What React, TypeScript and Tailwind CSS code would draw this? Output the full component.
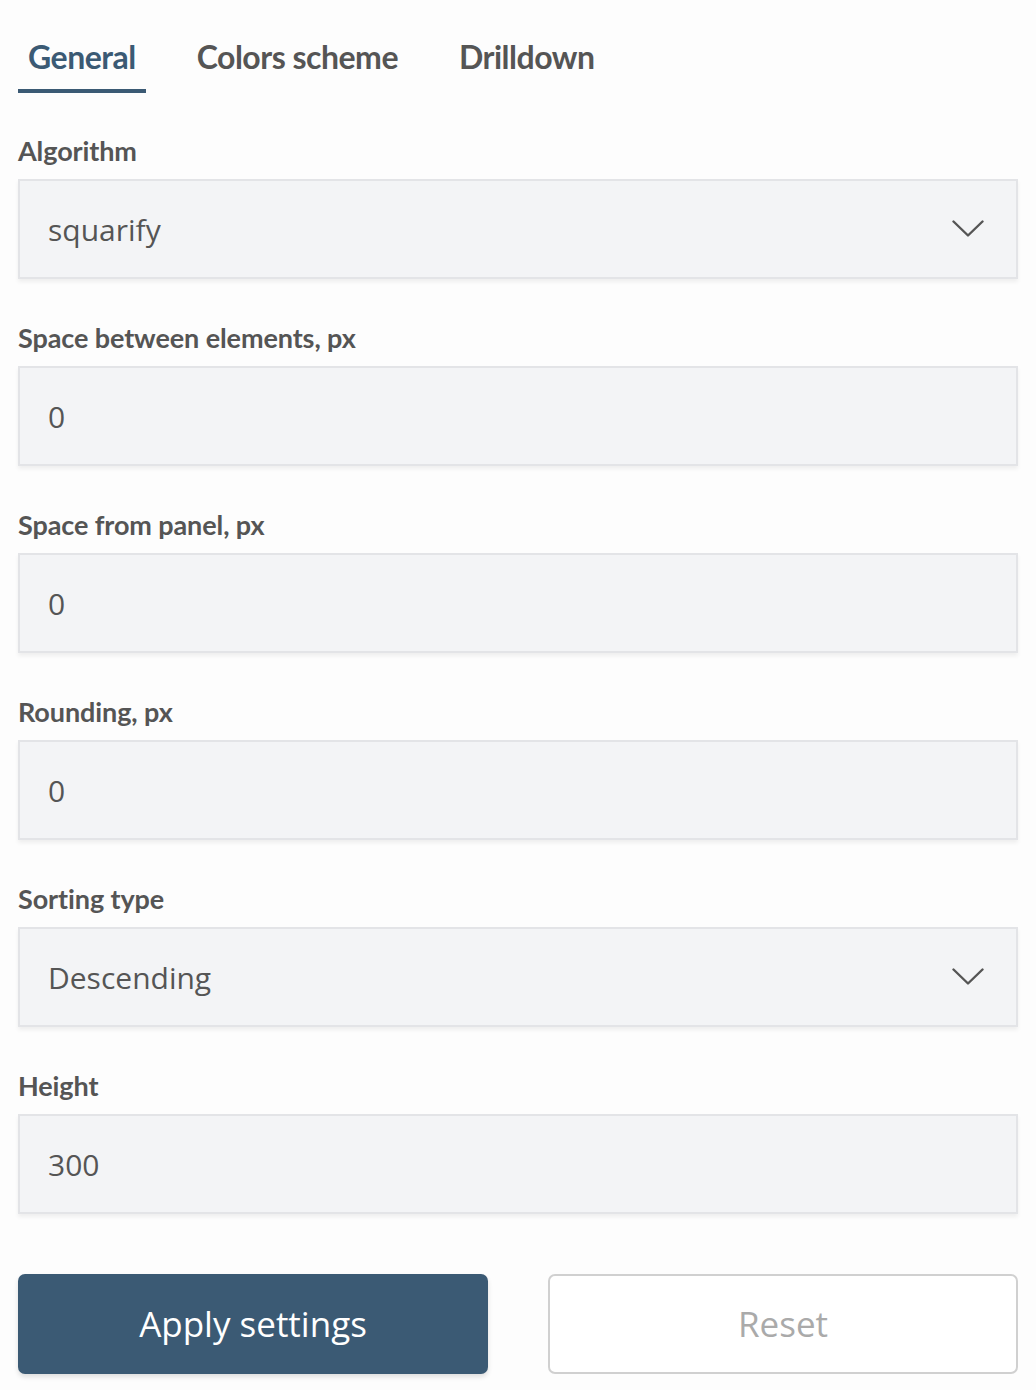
import { useState } from 'react';

const tabs = ['General', 'Colors scheme', 'Drilldown'];

const Chevron = () => (
  <svg width="32" height="18" viewBox="0 0 32 18" fill="none" className="shrink-0">
    <path d="M1.5 1.5 L16 15.5 L30.5 1.5" stroke="#555" strokeWidth="2.4" strokeLinecap="round" strokeLinejoin="round" />
  </svg>
);

const Field = ({ label, value, select }: { label: string; value: string; select?: boolean }) => (
  <div className="flex flex-col">
    <label className="text-[27px] font-bold text-[#555] leading-[37px] mb-[10px] tracking-[-0.1px]" style={{ fontFamily: 'Lato, sans-serif' }}>
      {label}
    </label>
    <div className="h-[100px] flex items-center justify-between pl-[28px] pr-[32px] bg-[#f3f4f6] border-2 border-[#e3e4e7] shadow-[0_3px_4px_rgba(0,0,0,0.06)] text-[30px] text-[#555]" style={{ fontFamily: '"Open Sans", sans-serif' }}>
      <span>{value}</span>
      {select && <Chevron />}
    </div>
  </div>
);

const App = () => {
  const [active, setActive] = useState<number>(0);

  return (
    <div className="min-h-[1390px] bg-[#fdfdfd] px-[18px] pt-[25px]">
      <div className="flex gap-[41px] mb-[39px]">
        {tabs.map((t, i) => (
          <button
            key={t}
            onClick={() => setActive(i)}
            className={`h-[68px] px-[10px] text-[32px] font-bold tracking-[-0.5px] border-b-4 ${
              i === active ? 'text-[#3b5a74] border-[#3b5a74]' : 'text-[#555] border-transparent'
            }`}
            style={{ fontFamily: 'Lato, sans-serif' }}
          >
            {t}
          </button>
        ))}
      </div>

      <div className="flex flex-col gap-[40px]">
        <Field label="Algorithm" value="squarify" select />
        <Field label="Space between elements, px" value="0" />
        <Field label="Space from panel, px" value="0" />
        <Field label="Rounding, px" value="0" />
        <Field label="Sorting type" value="Descending" select />
        <Field label="Height" value="300" />
      </div>

      <div className="flex justify-between mt-[60px]">
        <button className="w-[470px] h-[100px] rounded-[7px] bg-[#3b5a74] text-white text-[35px] shadow-[0_3px_5px_rgba(0,0,0,0.12)]" style={{ fontFamily: '"Open Sans", sans-serif' }}>
          Apply settings
        </button>
        <button className="w-[470px] h-[100px] rounded-[7px] bg-white border-2 border-[#d0d0d0] text-[#aaa] text-[35px]" style={{ fontFamily: '"Open Sans", sans-serif' }}>
          Reset
        </button>
      </div>
    </div>
  );
};

export default App;
